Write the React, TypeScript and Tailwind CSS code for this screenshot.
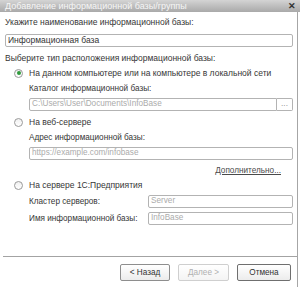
import React from "react";

function Radio({ checked }: { checked?: boolean }) {
  return (
    <span className="w-[9px] h-[9px] rounded-full border border-[#9a9a9a] bg-gradient-to-b from-[#f0f0f0] to-white flex items-center justify-center shrink-0">
      {checked && <span className="w-[4px] h-[4px] rounded-full bg-[#2f9a3c]" />}
    </span>
  );
}

function Field({ text, placeholder, className = "" }: { text?: string; placeholder?: string; className?: string }) {
  return (
    <div className={"h-[13px] border border-[#b3b3b3] rounded-[2px] bg-white flex items-center pl-[2px] leading-none " + className}>
      {text ? <span className="text-[#333] text-[8.5px]">{text}</span> : <span className="text-[#ababab]">{placeholder}</span>}
    </div>
  );
}

export default function App() {
  return (
    <div className="w-[300px] h-[287px] bg-white overflow-hidden flex flex-col text-[8.2px] text-[#363636] font-['Liberation_Sans',Arial,sans-serif] leading-[12px]">
      <div className="h-[12px] shrink-0 bg-gradient-to-b from-[#d4d4d4] to-[#a9a9a9] flex items-center justify-between pl-[5px] pr-[4px]">
        <span className="text-[9px] text-[#f6f6f6] leading-none">Добавление информационной базы/группы</span>
        <span className="text-[9px] text-[#333] leading-none font-bold">✕</span>
      </div>
      <div className="flex-1 w-[298px] border-r border-[#a6a6a6] flex flex-col">
        <div className="flex flex-col pl-[5px] pr-[4px]">
          <div className="mt-[4px] text-[8.5px]">Укажите наименование информационной базы:</div>
          <Field className="mt-[6px]" text="Информационная база" />
          <div className="mt-[5px] text-[8.5px]">Выберите тип расположения информационной базы:</div>

          <div className="mt-[3px] flex items-center gap-[6px] pl-[9px]">
            <Radio checked />
            <span className="text-[8.5px]">На данном компьютере или на компьютере в локальной сети</span>
          </div>
          <div className="pl-[24px] flex flex-col">
            <div className="mt-[4px]">Каталог информационной базы:</div>
            <div className="mt-[3px] flex">
              <Field className="flex-1 rounded-r-none" placeholder="C:\Users\User\Documents\InfoBase" />
              <div className="w-[16px] h-[13px] border border-l-0 border-[#b3b3b3] rounded-r-[2px] flex items-center justify-center text-[#999] leading-none">...</div>
            </div>
          </div>

          <div className="mt-[5px] flex items-center gap-[6px] pl-[9px]">
            <Radio />
            <span className="text-[8.5px]">На веб-сервере</span>
          </div>
          <div className="pl-[24px] flex flex-col">
            <div className="mt-[4px]">Адрес информационной базы:</div>
            <Field className="mt-[3px]" placeholder="https://example.com/infobase" />
            <div className="mt-[5px] self-end mr-[12px] underline text-[#4a4a4a]">Дополнительно...</div>
          </div>

          <div className="mt-[2px] flex items-center gap-[6px] pl-[9px]">
            <Radio />
            <span className="text-[8.5px]">На сервере 1С:Предприятия</span>
          </div>
          <div className="pl-[24px] flex flex-col">
            <div className="mt-[4px] flex items-center">
              <span className="w-[119px] shrink-0 whitespace-nowrap">Кластер серверов:</span>
              <Field className="flex-1" placeholder="Server" />
            </div>
            <div className="mt-[4px] flex items-center">
              <span className="w-[119px] shrink-0 whitespace-nowrap">Имя информационной базы:</span>
              <Field className="flex-1" placeholder="InfoBase" />
            </div>
          </div>
        </div>
        <div className="flex-1" />
        <div className="ml-[3px] h-px bg-[#a3a3a3]" />
        <div className="mt-[7px] mb-[6px] flex justify-end gap-[8px] pr-[6px]">
          <div className="w-[50px] h-[17px] border border-[#8e8e8e] rounded-[2px] bg-gradient-to-b from-white to-[#ececec] flex items-center justify-center text-[#333]">&lt; Назад</div>
          <div className="w-[51px] h-[17px] border border-[#cfcfcf] rounded-[2px] bg-gradient-to-b from-white to-[#f4f4f4] flex items-center justify-center text-[#b0b0b0]">Далее &gt;</div>
          <div className="w-[54px] h-[17px] border border-[#6f6f6f] rounded-[2px] bg-gradient-to-b from-white to-[#ececec] flex items-center justify-center text-[#333]">Отмена</div>
        </div>
      </div>
    </div>
  );
}
